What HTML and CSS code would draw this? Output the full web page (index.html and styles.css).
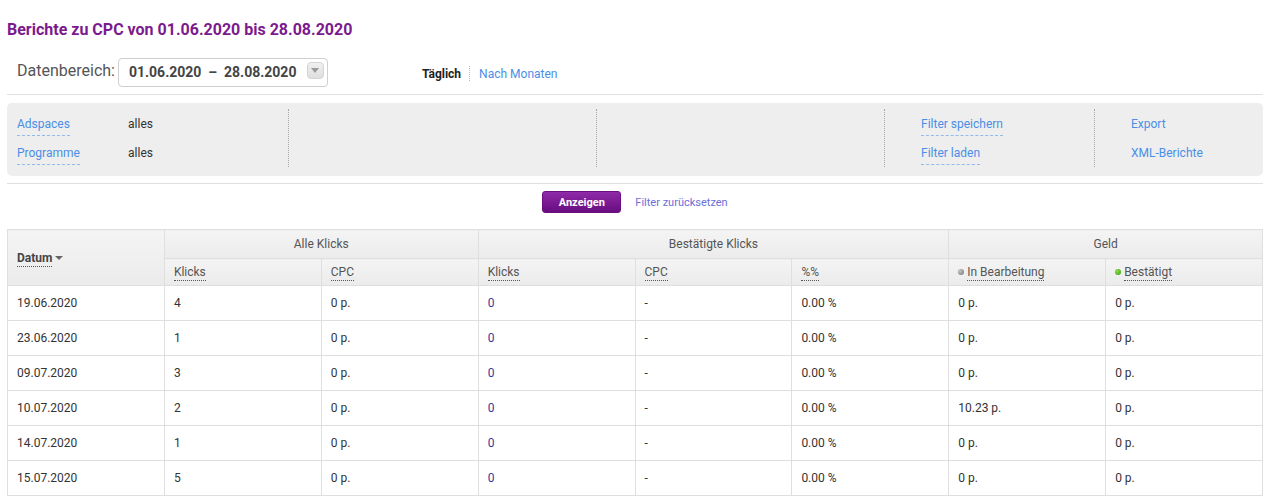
FILE: index.html
```html
<!DOCTYPE html>
<html lang="de">
<head>
<meta charset="utf-8">
<title>Berichte zu CPC</title>
<link rel="stylesheet" href="styles.css">
</head>
<body>
<div class="page">
  <h1 class="title">Berichte zu CPC von 01.06.2020 bis 28.08.2020</h1>

  <div class="range-row">
    <span class="range-label">Datenbereich:</span>
    <div class="range-box">
      <span class="range-text">01.06.2020 &nbsp;– &nbsp;28.08.2020</span>
      <span class="range-btn"><svg width="8" height="5" viewBox="0 0 8 5"><path d="M0 0h8L4 5z" fill="#9a9a9a"/></svg></span>
    </div>
    <div class="view-switch">
      <span class="view-active">Täglich</span>
      <span class="view-sep"></span>
      <a class="link">Nach Monaten</a>
    </div>
  </div>

  <div class="rule"></div>

  <div class="filter-panel">
    <div class="fcol fcol-first">
      <div class="frow"><a class="link dashed flabel">Adspaces</a><span class="fval">alles</span></div>
      <div class="frow"><a class="link dashed flabel">Programme</a><span class="fval">alles</span></div>
    </div>
    <div class="fcol"></div>
    <div class="fcol"></div>
    <div class="fcol fcol-pad">
      <div class="frow"><a class="link dashed">Filter speichern</a></div>
      <div class="frow"><a class="link dashed">Filter laden</a></div>
    </div>
    <div class="fcol fcol-pad">
      <div class="frow"><a class="link">Export</a></div>
      <div class="frow"><a class="link">XML-Berichte</a></div>
    </div>
  </div>

  <div class="rule"></div>

  <div class="actions">
    <button class="btn-show">Anzeigen</button>
    <a class="reset-link">Filter zurücksetzen</a>
  </div>

  <table class="report">
    <thead>
      <tr class="hrow1">
        <th rowspan="2" class="th-date"><span class="dotted">Datum</span><span class="sort-arrow"></span></th>
        <th colspan="2" class="th-group">Alle Klicks</th>
        <th colspan="3" class="th-group">Bestätigte Klicks</th>
        <th colspan="2" class="th-group">Geld</th>
      </tr>
      <tr class="hrow2">
        <th><span class="dotted">Klicks</span></th>
        <th><span class="dotted">CPC</span></th>
        <th><span class="dotted">Klicks</span></th>
        <th><span class="dotted">CPC</span></th>
        <th><span class="dotted">%%</span></th>
        <th><span class="dot dot-gray"></span><span class="dotted">In Bearbeitung</span></th>
        <th><span class="dot dot-green"></span><span class="dotted">Bestätigt</span></th>
      </tr>
    </thead>
    <tbody>
      <tr><td>19.06.2020</td><td>4</td><td>0 p.</td><td class="num-link">0</td><td>-</td><td>0.00 %</td><td>0 p.</td><td>0 p.</td></tr>
      <tr><td>23.06.2020</td><td>1</td><td>0 p.</td><td class="num-link">0</td><td>-</td><td>0.00 %</td><td>0 p.</td><td>0 p.</td></tr>
      <tr><td>09.07.2020</td><td>3</td><td>0 p.</td><td class="num-link">0</td><td>-</td><td>0.00 %</td><td>0 p.</td><td>0 p.</td></tr>
      <tr><td>10.07.2020</td><td>2</td><td>0 p.</td><td class="num-link">0</td><td>-</td><td>0.00 %</td><td>10.23 p.</td><td>0 p.</td></tr>
      <tr><td>14.07.2020</td><td>1</td><td>0 p.</td><td class="num-link">0</td><td>-</td><td>0.00 %</td><td>0 p.</td><td>0 p.</td></tr>
      <tr><td>15.07.2020</td><td>5</td><td>0 p.</td><td class="num-link">0</td><td>-</td><td>0.00 %</td><td>0 p.</td><td>0 p.</td></tr>
    </tbody>
  </table>
</div>
</body>
</html>
```

FILE: styles.css
```css
* { box-sizing: border-box; }
html, body { margin: 0; padding: 0; background: #fff; }
body { font-family: Roboto, "Liberation Sans", Arial, sans-serif; color: #333; font-size: 12px; }

.page { width: 1256px; margin-left: 7px; padding-top: 20px; }

.title {
  margin: 0;
  font-size: 16px;
  line-height: 20px;
  font-weight: bold;
  color: #7b1a8e;
}

.range-row {
  display: flex;
  align-items: center;
  height: 30px;
  margin-top: 17px;
  padding-left: 10px;
}
.range-label { font-size: 16px; color: #555; margin-right: 3px; margin-top: -4px; }
.range-box {
  display: flex;
  align-items: center;
  width: 210px;
  height: 29px;
  border: 1px solid #cfcfcf;
  border-radius: 4px;
  padding-left: 10px;
  padding-right: 3px;
}
.range-text { font-size: 14px; font-weight: bold; color: #444; flex: 1; }
.range-btn {
  width: 17px;
  height: 17px;
  border: 1px solid #d4d4d4;
  border-radius: 4px;
  background: linear-gradient(#f0f0f0, #dedede);
  display: flex;
  align-items: center;
  justify-content: center;
  margin-top: -4px;
}
.view-switch { display: flex; align-items: center; margin-left: 94px; margin-top: 3px; }
.view-active { font-weight: bold; color: #222; font-size: 12px; }
.view-sep { width: 0; height: 15px; border-left: 1px dotted #bbb; margin: 0 9px 0 8px; }

.link { color: #4a8ee6; text-decoration: none; cursor: pointer; }
.dashed { border-bottom: 1px dashed #8fb9ef; padding-bottom: 4px; margin-top: 6px; }

.rule { height: 1px; background: #e0e0e0; }
.range-row + .rule { margin-top: 7px; }

.filter-panel {
  display: grid;
  grid-template-columns: 281px 308px 288px 210px 1fr;
  background: #eeeeee;
  border-radius: 5px;
  margin: 8px 0 7px;
  padding: 6px 0 9px;
}
.fcol { border-left: 1px dotted #a8a8a8; min-height: 57px; }
.fcol-first { border-left: none; padding-left: 10px; }
.fcol-pad { padding-left: 36px; }
.frow { height: 29px; display: flex; align-items: center; }
.fcol-first .frow { width: 136px; }
.fcol-first .frow .fval { margin-left: auto; }
.fval { color: #333; }

.actions {
  display: flex;
  align-items: center;
  justify-content: center;
  height: 45px;
  padding-bottom: 9px;
}
.btn-show {
  width: 79px;
  height: 22px;
  border: 1px solid #6a0f80;
  border-radius: 3px;
  background: linear-gradient(#8f2aa8, #680c80);
  color: #fff;
  font-family: Roboto, "Liberation Sans", Arial, sans-serif;
  font-size: 11px;
  font-weight: bold;
  padding: 0;
}
.reset-link { color: #6a70d8; font-size: 11px; margin-left: 14px; }

.report {
  width: 1256px;
  border-collapse: collapse;
  table-layout: fixed;
  border: 1px solid #dcdcdc;
}
.report th, .report td { border: 1px solid #dfdfdf; }
.report thead th {
  background: linear-gradient(#f4f4f4, #ebebeb);
  font-weight: normal;
  color: #555;
  font-size: 12px;
}
.hrow1 th { height: 29px; }
.hrow2 th { height: 27px; text-align: left; padding-left: 9px; }
.th-group { text-align: center; }
.th-date { text-align: left; padding-left: 9px; padding-top: 2px; }
.th-date .dotted { font-weight: bold; color: #444; }
.dotted { border-bottom: 1px dotted #555; padding-bottom: 1px; }
.sort-arrow {
  display: inline-block;
  width: 0; height: 0;
  border-left: 4px solid transparent;
  border-right: 4px solid transparent;
  border-top: 4px solid #666;
  margin-left: 3px;
  vertical-align: 2px;
}
.dot { display: inline-block; width: 6px; height: 6px; border-radius: 50%; margin-right: 3px; vertical-align: 1px; }
.dot-gray { background: radial-gradient(circle at 35% 35%, #c8c8c8, #6e6e6e); }
.dot-green { background: radial-gradient(circle at 35% 35%, #8be04a, #2f9a08); }

.report td { height: 35px; padding: 0 0 0 9px; color: #333; font-size: 12px; }
.report td.num-link { color: #2e3a9c; }
```
